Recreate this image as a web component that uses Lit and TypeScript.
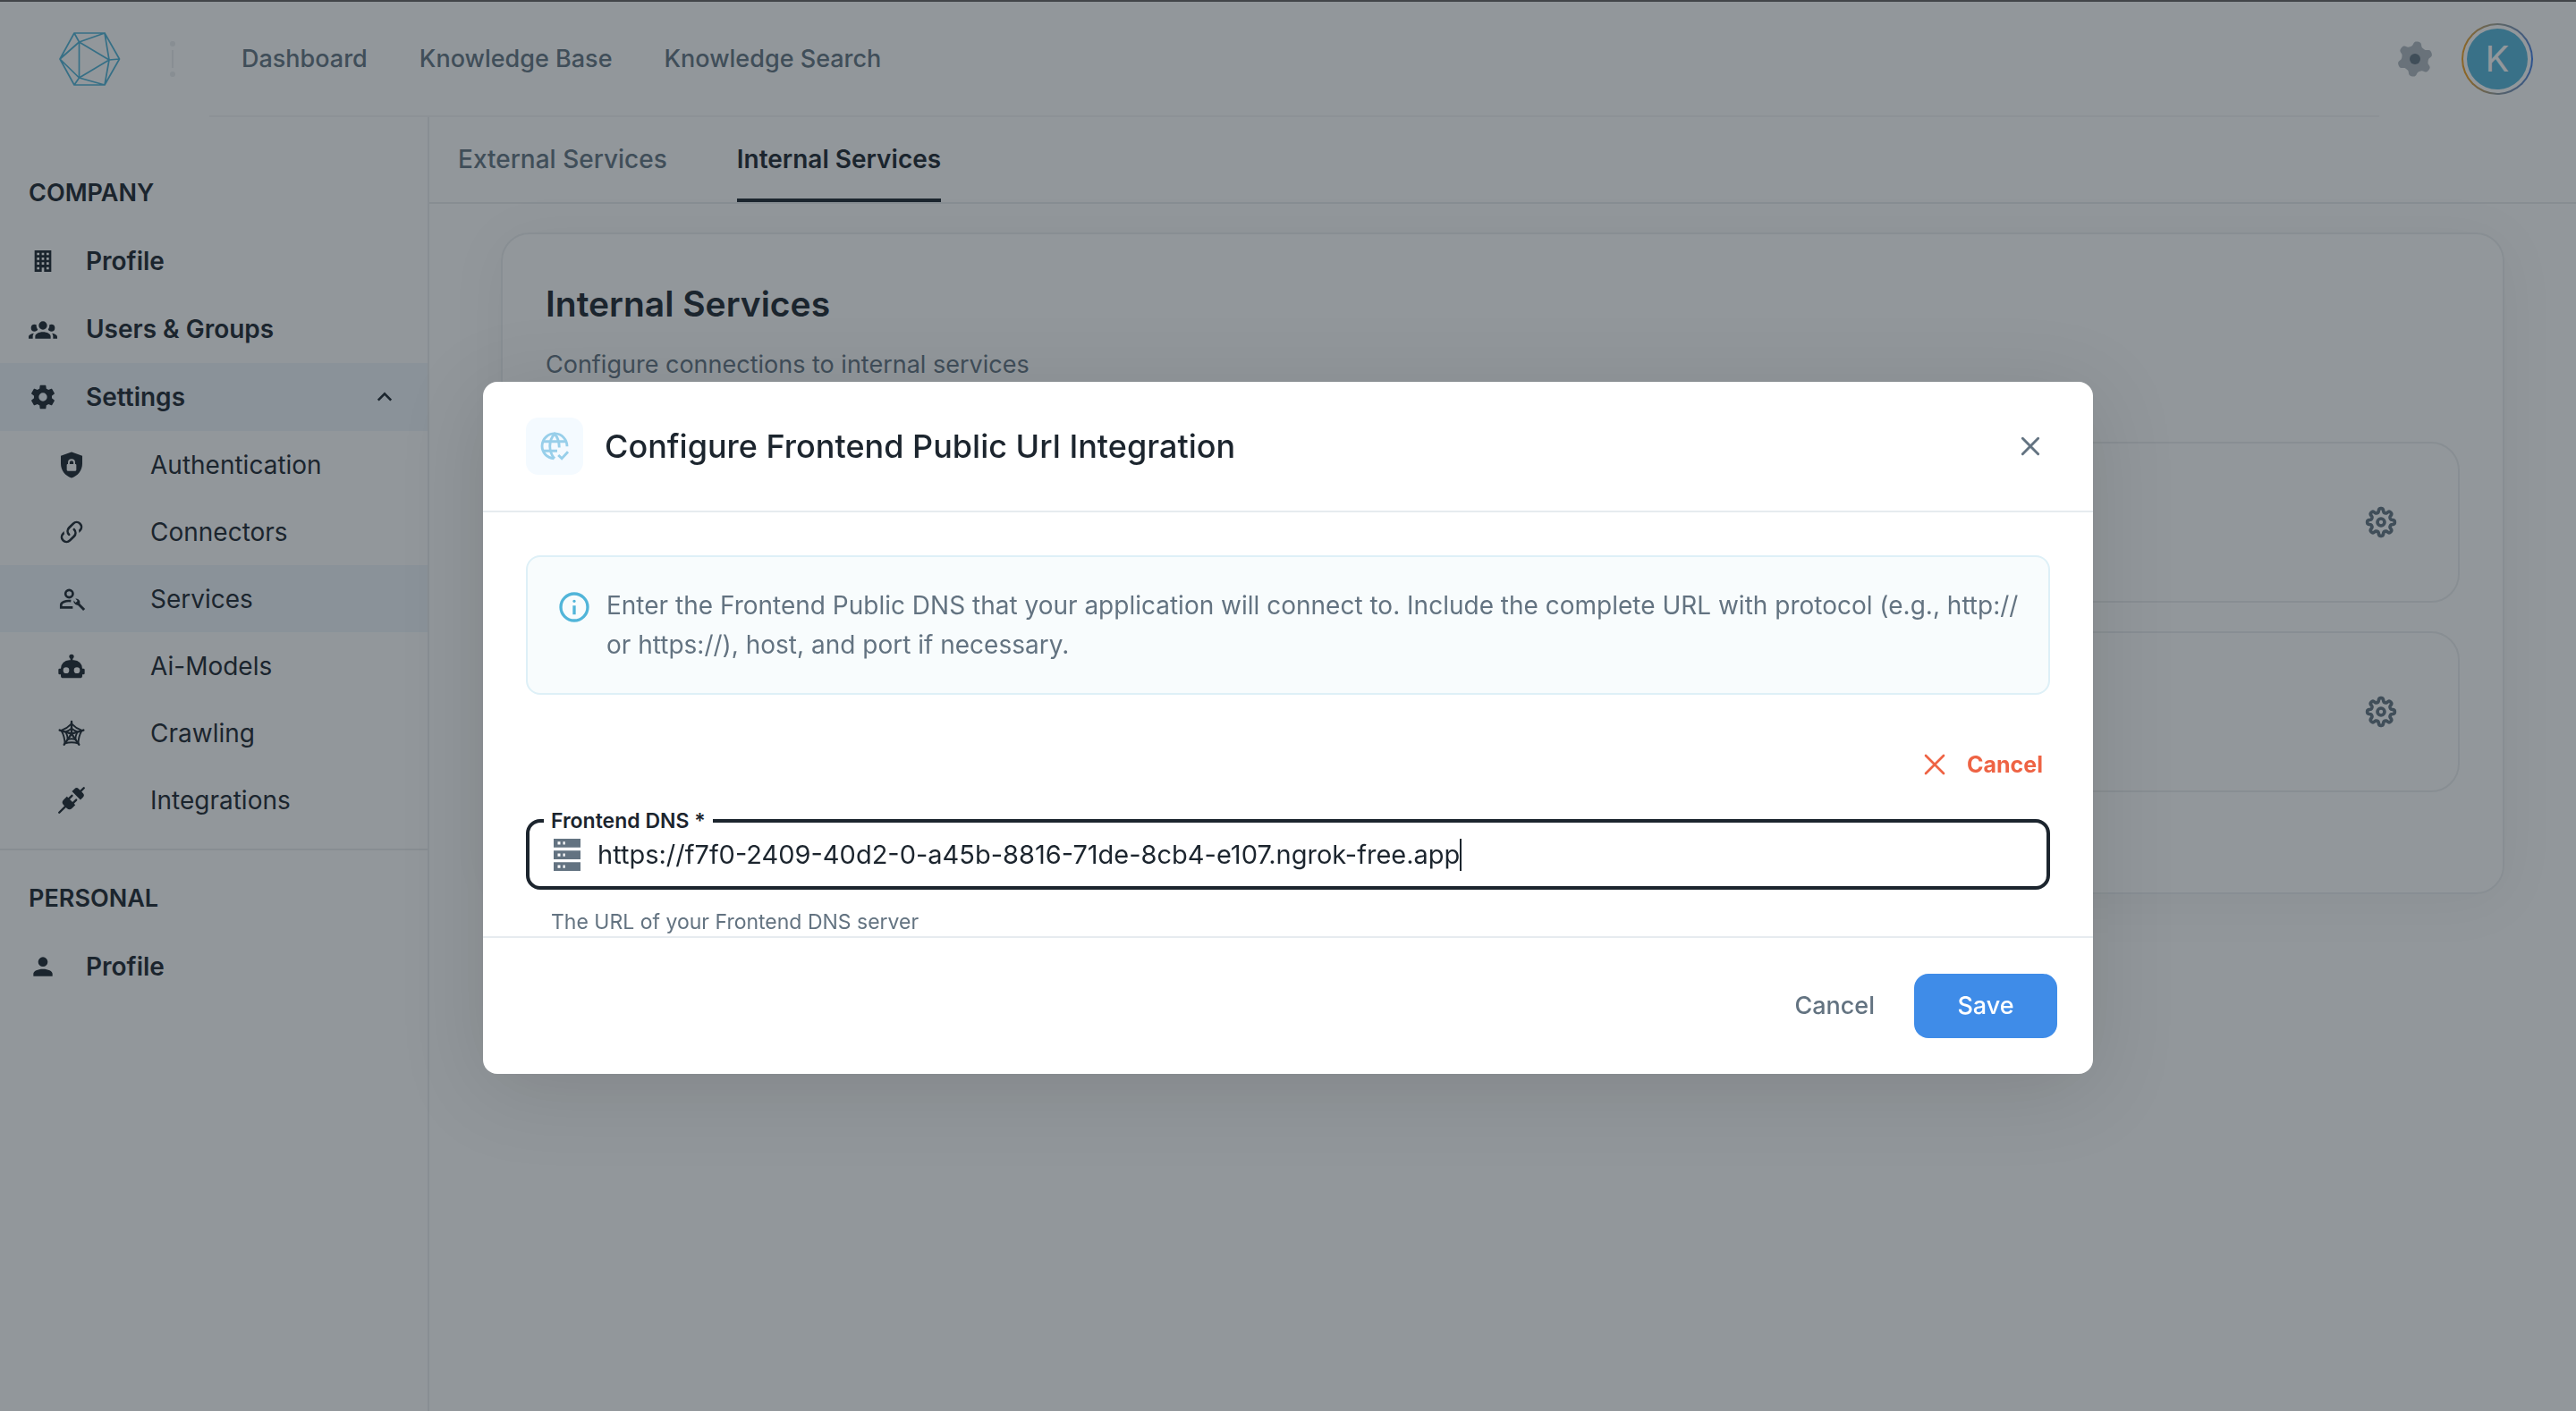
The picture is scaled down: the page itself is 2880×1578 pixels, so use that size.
import { LitElement, html, css, svg, nothing } from "lit";
import { customElement, property } from "lit/decorators.js";
import { classMap } from "lit/directives/class-map.js";

/** Closed outline of a cog with `teeth` rounded teeth on a 24 x 24 grid. */
function cogPath(teeth: number, outer: number, inner: number, turn: number, sharp: number): string {
  const steps = teeth * 24;
  const mid = (outer + inner) / 2;
  const half = (outer - inner) / 2;
  const points: string[] = [];
  for (let i = 0; i < steps; i++) {
    const a = (i / steps) * Math.PI * 2;
    const r = mid + (half * Math.tanh(sharp * Math.cos(teeth * a))) / Math.tanh(sharp);
    const t = a + turn - Math.PI / 2;
    points.push(`${(12 + r * Math.cos(t)).toFixed(2)} ${(12 + r * Math.sin(t)).toFixed(2)}`);
  }
  return `M${points.join("L")}Z`;
}

const fill = (d: string) => svg`<path fill="currentColor" fill-rule="evenodd" d=${d}></path>`;

const icons: Record<string, unknown> = {
  building: fill("M5 3v18h6v-3.5h2V21h6V3H5m2 2h2v2H7V5m4 0h2v2h-2V5m4 0h2v2h-2V5M7 9h2v2H7V9m4 0h2v2h-2V9m4 0h2v2h-2V9m-8 4h2v2H7v-2m4 0h2v2h-2v-2m4 0h2v2h-2v-2m-8 4h2v2H7v-2m8 0h2v2h-2v-2Z"),
  group: fill("M12 5.5A3.5 3.5 0 0 1 15.5 9a3.5 3.5 0 0 1-3.5 3.5A3.5 3.5 0 0 1 8.5 9A3.5 3.5 0 0 1 12 5.5M5 8c.56 0 1.08.15 1.53.42c-.15 1.43.27 2.85 1.13 3.96C7.16 13.34 6.16 14 5 14a3 3 0 0 1-3-3a3 3 0 0 1 3-3m14 0a3 3 0 0 1 3 3a3 3 0 0 1-3 3c-1.16 0-2.16-.66-2.66-1.62a5.536 5.536 0 0 0 1.13-3.96c.45-.27.97-.42 1.53-.42M5.5 18.25c0-2.07 2.91-3.75 6.5-3.75s6.5 1.68 6.5 3.75V20h-13v-1.75M0 20v-1.5c0-1.39 1.89-2.56 4.45-2.9c-.59.68-.95 1.62-.95 2.65V20H0m24 0h-3.5v-1.75c0-1.03-.36-1.97-.95-2.65c2.56.34 4.45 1.51 4.45 2.9V20Z"),
  cog: fill("M12 15.5A3.5 3.5 0 0 1 8.5 12A3.5 3.5 0 0 1 12 8.5a3.5 3.5 0 0 1 3.5 3.5a3.5 3.5 0 0 1-3.5 3.5m7.43-2.53c.04-.32.07-.64.07-.97c0-.33-.03-.66-.07-1l2.11-1.63c.19-.15.24-.42.12-.64l-2-3.46c-.12-.22-.39-.31-.61-.22l-2.49 1c-.52-.39-1.06-.73-1.69-.98l-.37-2.65A.506.506 0 0 0 14 2h-4c-.25 0-.46.18-.5.42l-.37 2.65c-.63.25-1.17.59-1.69.98l-2.49-1c-.22-.09-.49 0-.61.22l-2 3.46c-.13.22-.07.49.12.64L4.57 11c-.04.34-.07.67-.07 1c0 .33.03.65.07.97l-2.11 1.66c-.19.15-.25.42-.12.64l2 3.46c.12.22.39.3.61.22l2.49-1.01c.52.4 1.06.74 1.69.99l.37 2.65c.04.24.25.42.5.42h4c.25 0 .46-.18.5-.42l.37-2.65c.63-.26 1.17-.59 1.69-.99l2.49 1.01c.22.08.49 0 .61-.22l2-3.46c.12-.22.07-.49-.12-.64l-2.11-1.66Z"),
  person: fill("M12 4a4 4 0 0 1 4 4a4 4 0 0 1-4 4a4 4 0 0 1-4-4a4 4 0 0 1 4-4m0 10c4.42 0 8 1.79 8 4v2H4v-2c0-2.21 3.58-4 8-4Z"),
  shield: fill("M12 1.200L21 4.400v6.400c0 5.600-3.600 10.300-9 12c-5.400-1.700-9-6.400-9-12V4.400ZM12 7a3 3 0 0 0-3 3v1.200h-.2a.8.8 0 0 0-.8.8v4.200a.8.8 0 0 0 .8.8h6.400a.8.8 0 0 0 .8-.8V12a.8.8 0 0 0-.8-.8H15V10a3 3 0 0 0-3-3m0 1.400a1.600 1.600 0 0 1 1.600 1.600v1.200h-3.200V10A1.600 1.600 0 0 1 12 8.400Z"),
  link: fill("M10.59 13.41c.41.39.41 1.03 0 1.42c-.39.39-1.03.39-1.42 0a5.003 5.003 0 0 1 0-7.07l3.54-3.54a5.003 5.003 0 0 1 7.07 0a5.003 5.003 0 0 1 0 7.07l-1.49 1.49c.01-.82-.12-1.64-.4-2.42l.47-.48a2.982 2.982 0 0 0 0-4.24a2.982 2.982 0 0 0-4.24 0l-3.53 3.53a2.982 2.982 0 0 0 0 4.24m2.82-4.24c.39-.39 1.03-.39 1.42 0a5.003 5.003 0 0 1 0 7.07l-3.54 3.54a5.003 5.003 0 0 1-7.07 0a5.003 5.003 0 0 1 0-7.07l1.49-1.49c-.01.82.12 1.64.4 2.43l-.47.47a2.982 2.982 0 0 0 0 4.24a2.982 2.982 0 0 0 4.24 0l3.53-3.53a2.982 2.982 0 0 0 0-4.24a.973.973 0 0 1 0-1.42Z"),
  manage: svg`<g fill="none" stroke="currentColor" stroke-width="2">
      <circle cx="10" cy="7.500" r="3.100"></circle>
      <path d="M11.500 13.600C7 13 3.200 14.800 3.200 16.800V19H13"></path>
      <path stroke-width="2.200" d="M17 15.400L22.600 21"></path>
    </g>
    <path fill="currentColor" d="M13.700 13.200L15.500 15L17 13.500L15.200 11.700A3.300 3.300 0 0 1 18.900 16.300A3.300 3.300 0 0 1 13.700 13.200Z"></path>`,
  robot: fill("M12 2a2 2 0 0 1 2 2c0 .74-.4 1.39-1 1.73V7h1a7 7 0 0 1 7 7h1a1 1 0 0 1 1 1v3a1 1 0 0 1-1 1h-1v1a2 2 0 0 1-2 2H5a2 2 0 0 1-2-2v-1H2a1 1 0 0 1-1-1v-3a1 1 0 0 1 1-1h1a7 7 0 0 1 7-7h1V5.73c-.6-.34-1-.99-1-1.73a2 2 0 0 1 2-2M7.500 13A2.500 2.500 0 0 0 5 15.500A2.500 2.500 0 0 0 7.500 18a2.500 2.500 0 0 0 2.500-2.500A2.500 2.500 0 0 0 7.500 13m9 0a2.500 2.500 0 0 0-2.500 2.500a2.500 2.500 0 0 0 2.500 2.500a2.500 2.500 0 0 0 2.500-2.500a2.500 2.500 0 0 0-2.500-2.500Z"),
  web: svg`<g fill="none" stroke="currentColor" stroke-linecap="round" stroke-linejoin="round">
      <path stroke-width="1.800" d="M12 12.500V2.200M12 12.500L22 9.400M12 12.500L18.200 21.500M12 12.500L5.800 21.500M12 12.500L2 9.400"></path>
      <path stroke-width="1.400" d="M12 4Q15.500 7.800 20.600 9.700Q17.800 14.500 17.600 20.600Q12 18.700 6.400 20.600Q6.200 14.500 3.400 9.700Q8.500 7.800 12 4ZM12 8Q14.300 9.800 17 10.700Q15.300 13.800 15.200 17.200Q12 16.200 8.800 17.200Q8.700 13.800 7 10.700Q9.700 9.800 12 8Z"></path>
    </g>`,
  plug: svg`<g transform="rotate(45 12 12)">
      <path fill="currentColor" d="M11.100-2.600a.9.900 0 0 1 1.800 0V1H14.500A2.500 2.500 0 0 1 17 3.500V6.500H7V3.500A2.500 2.500 0 0 1 9.500 1H11.100Z"></path>
      <path fill="currentColor" d="M7 12.500H8.600V9a.9.900 0 0 1 1.800 0V12.500H13.600V9a.9.900 0 0 1 1.800 0V12.500H17V16.500A3 3 0 0 1 14 19.500H12.900V26.600a.9.900 0 0 1-1.800 0V19.500H10A3 3 0 0 1 7 16.500Z"></path>
    </g>`,
  chevron: svg`<path fill="none" stroke="currentColor" stroke-width="2" d="M6.600 14.700L12 9.300L17.400 14.700"></path>`,
  headerCog: svg`<path fill="currentColor" opacity="0.5" d=${cogPath(6, 11.8, 8.9, 0.16, 1.8)}></path>
    <circle fill="currentColor" cx="12" cy="12" r="3.600"></circle>`,
  outlineCog: svg`<g fill="none" stroke="currentColor" stroke-width="2.200">
      <path d=${cogPath(8, 9.2, 6.7, 0, 1.8)}></path>
      <circle cx="12" cy="12" r="2.400"></circle>
    </g>`,
  globe: svg`<g fill="none" stroke="currentColor" stroke-width="1.900">
      <path d="M11.500 21.200A9.300 9.300 0 1 1 21.300 12.200"></path>
      <path d="M3.500 8.500H20.500M3.500 15.500H14M12 21.200C9.500 18.500 8.500 15.500 8.500 12S9.500 5.500 12 2.800C14.500 5.500 15.500 8.500 15.500 13"></path>
      <path d="M14.800 18.600L17.400 21.200L22 16.200"></path>
    </g>`,
  close: svg`<path fill="none" stroke="currentColor" stroke-width="2.200" stroke-linecap="round" d="M5.500 5.500L18.500 18.500M18.500 5.500L5.500 18.500"></path>`,
  cancel: svg`<path fill="none" stroke="currentColor" stroke-width="2" stroke-linecap="round" d="M4.500 4.500L19.500 19.500M19.500 4.500L4.500 19.500"></path>`,
  info: fill("M11 17h2v-6h-2v6m1-8q.425 0 .713-.288T13 8t-.288-.712T12 7t-.712.288T11 8t.288.713T12 9m0 13A10 10 0 0 1 12 2A10 10 0 0 1 12 22m0-2A8 8 0 0 0 12 4A8 8 0 0 0 12 20"),
  server: fill("M2 0H22V6.500H2ZM5 2.200V4.300H7V2.200ZM9 2.200V4.300H10.500V2.200ZM2 8.800H22V15.300H2ZM5 11V13.100H7V11ZM9 11V13.100H10.500V11ZM2 17.500H22V24H2ZM5 19.700V21.800H7V19.700ZM9 19.700V21.800H10.500V19.700Z"),
};

@customElement("ui-icon")
export class UiIcon extends LitElement {
  @property() name = "";

  static styles = css`
    :host {
      display: block;
      flex: none;
      width: 32px;
      height: 32px;
    }
    .glyph {
      display: block;
      width: 100%;
      height: 100%;
      overflow: visible;
    }
  `;

  render() {
    return html`<svg class="glyph" viewBox="0 0 24 24" aria-hidden="true">${icons[this.name] ?? nothing}</svg>`;
  }
}

const base = css`
  * {
    box-sizing: border-box;
  }
  a {
    color: inherit;
    text-decoration: none;
  }
  button,
  input {
    font: inherit;
    color: inherit;
    border: 0;
    padding: 0;
    margin: 0;
    background: none;
  }
`;

@customElement("top-bar")
export class TopBar extends LitElement {
  static styles = [
    base,
    css`
      :host {
        display: block;
      }
      .bar {
        position: relative;
        display: flex;
        align-items: center;
        height: 130px;
        padding: 2px 48px 0 64px;
      }
      .rule {
        position: absolute;
        left: 234px;
        right: 220px;
        bottom: -1px;
        height: 2px;
        background: #f3f4f6;
      }
      .logo {
        display: block;
        width: 72px;
        height: 64px;
        color: #4fb3d6;
      }
      .divider {
        display: block;
        width: 6px;
        height: 40px;
        margin: 0 74px 0 54px;
        color: #ebedef;
      }
      .links {
        display: flex;
        gap: 58px;
        flex: 1;
        font-size: 27px;
        font-weight: 500;
        color: #637381;
      }
      .settings {
        width: 44px;
        height: 44px;
        margin-right: 30px;
        display: grid;
        place-items: center;
        color: #637381;
      }
      .settings ui-icon {
        width: 40px;
        height: 40px;
      }
      .account {
        width: 80px;
        height: 80px;
        padding: 2px;
        border-radius: 50%;
        background: conic-gradient(from 90deg, #3a7bea, #8f9aa0 90deg, #f0a020 150deg, #f0a020 200deg, #9fa39a 270deg, #3a7bea);
      }
      .well {
        display: grid;
        place-items: center;
        width: 76px;
        height: 76px;
        border-radius: 50%;
        background: #fff;
      }
      .initial {
        display: grid;
        place-items: center;
        width: 68px;
        height: 68px;
        border-radius: 50%;
        background: #55b7db;
        color: #fff;
        font-size: 40px;
        line-height: 1;
      }
    `,
  ];

  render() {
    return html`<header class="bar">
      <a href="#" aria-label="Home">
        <svg class="logo" viewBox="0 0 72 64" fill="none" stroke="currentColor" stroke-width="1.700" stroke-linejoin="round" aria-hidden="true">
          <path d="M19 3H53L69.500 32L53 61H19L3 32ZM24.500 13L58 33L24.500 53ZM19 3L24.500 13L53 3L58 33L53 61L24.500 53L19 61M3 32L24.500 13M3 32L24.500 53M58 33L69.500 32"></path>
        </svg>
      </a>
      <svg class="divider" viewBox="0 0 6 40" fill="currentColor" aria-hidden="true">
        <circle cx="3" cy="3" r="3"></circle>
        <rect x="2" y="10" width="2" height="20"></rect>
        <circle cx="3" cy="37" r="3"></circle>
      </svg>
      <nav class="links">
        <a href="#dashboard">Dashboard</a>
        <a href="#knowledge-base">Knowledge Base</a>
        <a href="#knowledge-search">Knowledge Search</a>
      </nav>
      <button class="settings" aria-label="Settings"><ui-icon name="headerCog"></ui-icon></button>
      <button class="account" aria-label="Account"><span class="well"><span class="initial">K</span></span></button>
      <div class="rule"></div>
    </header>`;
  }
}

interface NavItem {
  label: string;
  icon: string;
  active?: boolean;
  children?: NavItem[];
}

const sections: { title: string; items: NavItem[] }[] = [
  {
    title: "COMPANY",
    items: [
      { label: "Profile", icon: "building" },
      { label: "Users & Groups", icon: "group" },
      {
        label: "Settings",
        icon: "cog",
        active: true,
        children: [
          { label: "Authentication", icon: "shield" },
          { label: "Connectors", icon: "link" },
          { label: "Services", icon: "manage", active: true },
          { label: "Ai-Models", icon: "robot" },
          { label: "Crawling", icon: "web" },
          { label: "Integrations", icon: "plug" },
        ],
      },
    ],
  },
  { title: "PERSONAL", items: [{ label: "Profile", icon: "person" }] },
];

@customElement("side-nav")
export class SideNav extends LitElement {
  static styles = [
    base,
    css`
      :host {
        display: block;
        flex: none;
        width: 480px;
        border-right: 2px solid #ebedef;
      }
      .section {
        padding-top: 32px;
      }
      .section:first-child {
        padding-top: 64px;
      }
      .section + .section {
        margin-top: 17px;
        border-top: 2px solid #eaecee;
      }
      .title {
        margin: 0 0 16px;
        padding: 0 32px;
        font-size: 27px;
        line-height: 44px;
        font-weight: 600;
      }
      .row,
      .sub {
        display: flex;
        align-items: center;
        width: 100%;
      }
      .row {
        height: 76px;
        padding: 0 32px;
        gap: 32px;
        font-weight: 600;
      }
      .sub {
        height: 75px;
        padding: 0 64px;
        gap: 72px;
      }
      .active {
        background: #f0f6fc;
      }
      .toggle {
        margin-left: auto;
      }
    `,
  ];

  private item(item: NavItem, kind: "row" | "sub"): unknown {
    return html`<a class=${classMap({ [kind]: true, active: !!item.active })} href="#">
        <ui-icon name=${item.icon}></ui-icon>
        <span>${item.label}</span>
        ${item.children ? html`<ui-icon class="toggle" name="chevron"></ui-icon>` : nothing}
      </a>
      ${item.children?.map((child) => this.item(child, "sub"))}`;
  }

  render() {
    return html`<nav>
      ${sections.map(
        (section) => html`<section class="section">
          <h2 class="title">${section.title}</h2>
          ${section.items.map((item) => this.item(item, "row"))}
        </section>`,
      )}
    </nav>`;
  }
}

@customElement("services-page")
export class ServicesPage extends LitElement {
  static styles = [
    base,
    css`
      :host {
        display: block;
        flex: 1;
        min-width: 0;
      }
      .tabs {
        display: flex;
        gap: 78px;
        height: 98px;
        padding: 0 32px;
        border-bottom: 2px solid #eaecee;
        font-weight: 500;
        color: #637381;
      }
      .tab {
        display: flex;
        align-items: center;
        padding-top: 4px;
        border-bottom: 4px solid transparent;
      }
      .current {
        color: #1c252e;
        font-weight: 600;
        border-bottom-color: #1c252e;
      }
      .card {
        margin: 32px 80px;
        padding: 48px 48px 112px;
        border: 2px solid #eceeef;
        border-radius: 32px;
        box-shadow: 0 8px 64px rgba(0, 0, 0, 0.06);
      }
      .heading {
        margin: 0 0 16px;
        font-size: 39px;
        line-height: 60px;
        font-weight: 600;
      }
      .lead {
        margin: 0 0 64px;
        font-size: 27px;
        line-height: 44px;
        color: #637381;
      }
      .list {
        display: grid;
        gap: 32px;
      }
      .service {
        display: flex;
        align-items: center;
        justify-content: flex-end;
        height: 180px;
        padding: 0 64px;
        border: 2px solid #eceeef;
        border-radius: 32px;
      }
      .configure {
        display: grid;
        place-items: center;
        width: 44px;
        height: 44px;
        color: #637381;
      }
      .configure ui-icon {
        width: 40px;
        height: 40px;
      }
    `,
  ];

  render() {
    return html`<nav class="tabs">
        <a class="tab" href="#external">External Services</a>
        <a class="tab current" href="#internal" aria-current="page">Internal Services</a>
      </nav>
      <main class="card">
        <h1 class="heading">Internal Services</h1>
        <p class="lead">Configure connections to internal services</p>
        <div class="list">
          ${[0, 1].map(
            () => html`<div class="service">
              <button class="configure" aria-label="Configure"><ui-icon name="outlineCog"></ui-icon></button>
            </div>`,
          )}
        </div>
      </main>`;
  }
}

@customElement("configure-dialog")
export class ConfigureDialog extends LitElement {
  static styles = [
    base,
    css`
      :host {
        position: fixed;
        inset: 0;
        display: flex;
        align-items: center;
        justify-content: center;
        padding-top: 50px;
        background: rgba(28, 37, 46, 0.48);
      }
      .dialog {
        width: 1800px;
        max-width: 90%;
        border-radius: 16px;
        background: #fff;
        box-shadow: 0 16px 96px rgba(0, 0, 0, 0.13);
      }
      .head {
        display: flex;
        align-items: center;
        gap: 24px;
        padding: 40px 48px;
        border-bottom: 2px solid #e6ebef;
      }
      .badge {
        display: grid;
        place-items: center;
        width: 64px;
        height: 64px;
        border-radius: 14px;
        background: #f4faff;
        color: #98cfea;
      }
      .badge ui-icon {
        width: 36px;
        height: 36px;
      }
      .title {
        flex: 1;
        margin: 0;
        font-size: 36px;
        line-height: 56px;
        font-weight: 500;
      }
      .close {
        display: grid;
        place-items: center;
        width: 44px;
        height: 44px;
        color: #637381;
      }
      .body {
        display: flex;
        flex-direction: column;
        padding: 48px 48px 0;
      }
      .notice {
        display: flex;
        gap: 16px;
        padding: 32px;
        border: 2px solid #def0f7;
        border-radius: 16px;
        background: #f8fcfd;
        line-height: 44px;
        color: #637381;
      }
      .notice ui-icon {
        width: 40px;
        height: 40px;
        margin-top: 4px;
        color: #51b5d9;
      }
      .note {
        margin: 0;
      }
      .reset {
        align-self: flex-end;
        display: flex;
        align-items: center;
        gap: 20px;
        height: 56px;
        margin: 50px 0 33px;
        padding: 0 8px;
        font-size: 25px;
        font-weight: 700;
        color: #ee6344;
      }
      .field {
        position: relative;
        display: flex;
        align-items: center;
        height: 79px;
        padding: 0 24px;
        border: 4px solid #1c252e;
        border-radius: 16px;
        font-size: 29px;
      }
      .label {
        position: absolute;
        top: -18px;
        left: 16px;
        padding: 0 8px;
        background: #fff;
        font-size: 23px;
        line-height: 32px;
        font-weight: 600;
      }
      .field ui-icon {
        width: 36px;
        height: 36px;
        margin-right: 16px;
        color: #637381;
      }
      .input {
        field-sizing: content;
        max-width: 100%;
        height: 44px;
        outline: 0;
      }
      .caret {
        width: 2px;
        height: 36px;
        background: #1c252e;
      }
      .hint {
        margin: 20px 0 0;
        padding: 0 28px;
        font-size: 23px;
        line-height: 32px;
        color: #637381;
      }
      .foot {
        display: flex;
        align-items: center;
        justify-content: flex-end;
        gap: 24px;
        padding: 40px;
        border-top: 2px solid #e6ebef;
        font-size: 27px;
        font-weight: 500;
      }
      .plain {
        height: 72px;
        padding: 0 20px;
        color: #637381;
      }
      .primary {
        width: 160px;
        height: 72px;
        border-radius: 16px;
        background: #3f8ce8;
        color: #fff;
      }
    `,
  ];

  render() {
    return html`<form class="dialog" role="dialog" aria-modal="true" aria-labelledby="title">
      <header class="head">
        <div class="badge"><ui-icon name="globe"></ui-icon></div>
        <h2 class="title" id="title">Configure Frontend Public Url Integration</h2>
        <button class="close" type="button" aria-label="Close"><ui-icon name="close"></ui-icon></button>
      </header>
      <div class="body">
        <div class="notice">
          <ui-icon name="info"></ui-icon>
          <p class="note">
            Enter the Frontend Public DNS that your application will connect to. Include the complete URL with protocol
            (e.g., http:// or https://), host, and port if necessary.
          </p>
        </div>
        <button class="reset" type="button"><ui-icon name="cancel"></ui-icon>Cancel</button>
        <div class="field">
          <label class="label" for="dns">Frontend DNS *</label>
          <ui-icon name="server"></ui-icon>
          <input class="input" id="dns" type="text" required aria-describedby="hint" value="https://f7f0-2409-40d2-0-a45b-8816-71de-8cb4-e107.ngrok-free.app" />
          <span class="caret"></span>
        </div>
        <p class="hint" id="hint">The URL of your Frontend DNS server</p>
      </div>
      <footer class="foot">
        <button class="plain" type="button">Cancel</button>
        <button class="primary" type="submit">Save</button>
      </footer>
    </form>`;
  }
}

@customElement("app-root")
export class AppRoot extends LitElement {
  static styles = [
    base,
    css`
      :host {
        display: flex;
        flex-direction: column;
        min-height: 100vh;
        background: #fff;
        color: #1c252e;
        font-family: Inter, "Noto Sans", sans-serif;
        font-size: 28px;
        line-height: 44px;
      }
      .layout {
        display: flex;
        flex: 1;
      }
      .edge {
        position: fixed;
        top: 0;
        left: 0;
        right: 0;
        height: 2px;
        background: #424549;
      }
    `,
  ];

  render() {
    return html`<top-bar></top-bar>
      <div class="layout">
        <side-nav></side-nav>
        <services-page></services-page>
      </div>
      <configure-dialog></configure-dialog>
      <div class="edge"></div>`;
  }
}
